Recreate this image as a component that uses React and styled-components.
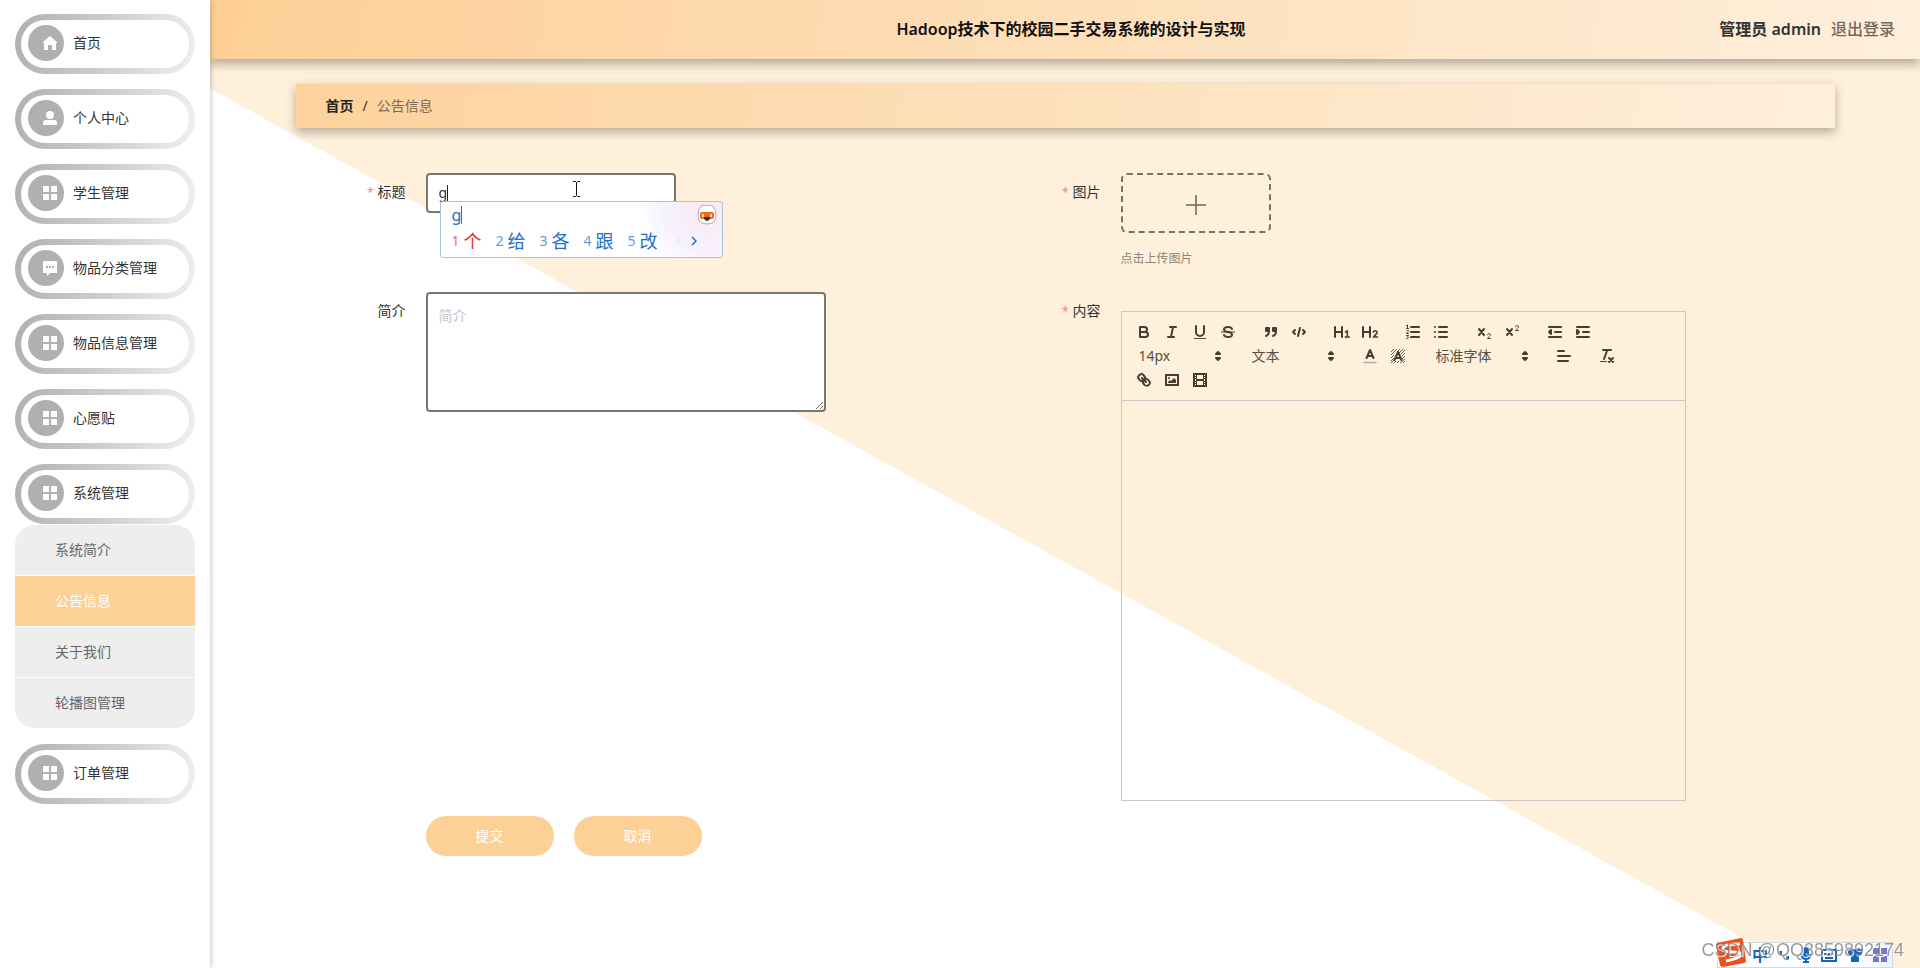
import { useState } from "react";
import styled, { createGlobalStyle } from "styled-components";

const GlobalStyle = createGlobalStyle`
  * {
    box-sizing: border-box;
  }

  body {
    margin: 0;
    color: #333;
    font-family: "Noto Sans", "Noto Sans CJK SC", sans-serif;
    font-size: 14px;
    line-height: 20px;
  }

  button, input, textarea, select {
    font: inherit;
    color: inherit;
  }

  a {
    color: inherit;
    text-decoration: none;
  }
`;

const Layout = styled.div`
  display: flex;
  min-height: 100vh;
`;

const Sidebar = styled.aside`
  position: relative;
  z-index: 2;
  flex: 0 0 210px;
  padding: 14px 15px;
  background-color: #fff;
  box-shadow: 0 0 6px rgba(0, 0, 0, 0.3);
`;

const Menu = styled.nav`
  display: flex;
  flex-direction: column;
  gap: 15px;
`;

const MenuLink = styled.a`
  display: flex;
  align-items: center;
  gap: 9px;
  height: 60px;
  padding: 0 7px 2px;
  border: 6px solid transparent;
  border-radius: 30px;
  background: linear-gradient(#fff, #fff) padding-box,
    linear-gradient(100deg, #b0b0b0, #cdcdcd 50%, #f0f0f0) border-box;
`;

const MenuIcon = styled.span`
  display: flex;
  align-items: center;
  justify-content: flex-end;
  width: 36px;
  height: 36px;
  padding-right: 7px;
  border-radius: 50%;
  background-color: #b0b0b0;
  color: #fff;
`;

const SubMenu = styled.div`
  margin-top: 1px;
  border-radius: 20px;
  overflow: hidden;
`;

const SubLink = styled.a`
  display: flex;
  align-items: center;
  height: 51px;
  padding-left: 40px;
  border-bottom: 1px solid #fff;
  background-color: ${(props) => (props.$active ? "#fdd098" : "#eee")};
  color: ${(props) => (props.$active ? "#fff" : "#666")};

  &:last-child {
    border-radius: 0 0 20px 20px;
  }
`;

const Group = styled.div``;

const Main = styled.main`
  flex: 1;
  min-width: 0;
  background: linear-gradient(29deg, #fff calc(50% - 69px), #fef0da calc(50% - 68px));
`;

const Header = styled.header`
  display: grid;
  grid-template-columns: 1fr auto 1fr;
  align-items: center;
  height: 59px;
  padding: 0 25px 2px 37px;
  background: linear-gradient(100deg, #fdcf96, #feefdc);
  box-shadow: 0 5px 10px rgba(0, 0, 0, 0.3);
  font-size: 16px;
  font-weight: 600;
`;

const Title = styled.h1`
  grid-column: 2;
  margin: 0;
  color: #111;
  font-size: 16px;
  font-weight: 600;
`;

const UserInfo = styled.div`
  display: flex;
  justify-content: flex-end;
  gap: 10px;
`;

const Logout = styled.a`
  color: #75695c;
  font-weight: 500;
`;

const Breadcrumb = styled.nav`
  display: flex;
  align-items: center;
  gap: 9px;
  height: 44px;
  margin: 25px 5% 45px;
  padding: 0 30px;
  background: linear-gradient(100deg, #fdd29c, #feefdc);
  box-shadow: 0 4px 10px rgba(0, 0, 0, 0.3);
`;

const CrumbLink = styled.a`
  color: #222;
  font-weight: 600;
`;

const Crumb = styled.span`
  color: #7a6b58;
`;

const Form = styled.form`
  display: grid;
  grid-template-columns: 1fr 1fr;
  row-gap: 15px;
  margin: 0 5%;
  padding: 0 99px 0 50px;
`;

const Field = styled.div`
  display: flex;
  align-items: flex-start;
  min-height: ${(props) => props.$height};
`;

const Label = styled.label`
  flex: 0 0 80px;
  padding-right: 20px;
  line-height: 38px;
  text-align: right;
  white-space: nowrap;

  ${(props) =>
    props.$required &&
    `
    &::before {
      content: "*";
      margin-right: 4px;
      color: #f58080;
      font-size: 12px;
    }
  `}
`;

const InputWrap = styled.div`
  position: relative;
`;

const Input = styled.input`
  display: block;
  width: 250px;
  height: 40px;
  padding: 0 11px 2px;
  border: 2px solid #7d766e;
  border-radius: 4px;
  background-color: #fff;
  outline: none;
`;

const Caret = styled.span`
  position: absolute;
  top: 12px;
  left: 21px;
  width: 1px;
  height: 16px;
  background-color: #222;
`;

const Pointer = styled.svg`
  position: absolute;
  top: 7px;
  left: 146px;
`;

const ImePanel = styled.div`
  position: absolute;
  z-index: 3;
  top: 28px;
  left: 14px;
  width: 283px;
  height: 57px;
  padding: 1px 11px;
  border: 1px solid #a9c4d6;
  border-radius: 3px;
  background: radial-gradient(circle at 95% 10%, #fbe9f3, #f6f2fd 16%, #fff 26%);
  color: #1f6fc9;
`;

const ImeTyped = styled.div`
  display: flex;
  align-items: center;
  justify-content: space-between;
  height: 24px;
  margin-right: -6px;
  font-size: 16px;

  span {
    height: 18px;
    border-right: 1px solid #d33;
    line-height: 18px;
  }
`;

const ImeList = styled.div`
  display: flex;
  align-items: center;
  gap: 14px;
  height: 28px;
  font-size: 18px;
`;

const Candidate = styled.span`
  display: flex;
  align-items: center;
  gap: 4px;
  color: ${(props) => (props.$active ? "#e0342b" : "#1f6fc9")};

  small {
    opacity: 0.7;
    font-size: 14px;
  }
`;

const ImePager = styled.span`
  display: flex;
  gap: 9px;
  margin-left: 4px;
`;

const TextArea = styled.textarea`
  display: block;
  width: 400px;
  height: 120px;
  padding: 12px 11px;
  border: 2px solid #7d766e;
  border-radius: 4px;
  background-color: #fff;
  outline: none;

  &::placeholder {
    color: #c0c4cc;
  }
`;

const UploadButton = styled.button`
  display: flex;
  align-items: center;
  justify-content: center;
  width: 150px;
  height: 60px;
  padding: 4px 0 0;
  border: 2px dashed #7d7063;
  border-radius: 6px;
  background: none;
  cursor: pointer;
`;

const UploadTip = styled.p`
  margin: 16px 0 0;
  color: #8d857b;
  font-size: 12px;
`;

const Editor = styled.div`
  flex: 1;
  margin: 19px 50px 0 0;
  border: 1px solid #cfc6c4;
`;

const Toolbar = styled.div`
  display: flex;
  flex-wrap: wrap;
  column-gap: 15px;
  padding: 8px;
  border-bottom: 1px solid #cfc6c4;
`;

const ToolGroup = styled.div`
  display: flex;
`;

const ToolButton = styled.button`
  width: 28px;
  height: 24px;
  padding: 3px 5px;
  border: none;
  background: none;
  cursor: pointer;
`;

const ToolIcon = styled.svg`
  display: block;
  width: 18px;
  height: 18px;
  fill: none;
  stroke: #473d33;
  stroke-width: 2;
  stroke-linecap: round;
  stroke-linejoin: round;

  .thin {
    stroke-width: 1;
  }

  .fill {
    fill: #473d33;
    stroke: none;
  }

  .solid {
    fill: #473d33;
  }
`;

const Picker = styled.div`
  position: relative;
  width: ${(props) => props.$width};
  height: 24px;
  color: #5a4f44;

  select {
    width: 100%;
    height: 24px;
    padding: 0 18px 0 9px;
    border: none;
    background: none;
    appearance: none;
    line-height: 24px;
  }

  svg {
    position: absolute;
    top: 3px;
    right: 1px;
    pointer-events: none;
  }
`;

const EditorBody = styled.textarea`
  display: block;
  width: 100%;
  height: 399px;
  padding: 12px 15px;
  border: none;
  background: none;
  outline: none;
  resize: none;
`;

const Actions = styled.div`
  display: flex;
  grid-column: 1 / -1;
  gap: 20px;
  padding-left: 80px;
`;

const ActionButton = styled.button`
  width: 128px;
  height: 40px;
  border: none;
  border-radius: 20px;
  background-color: #fdd098;
  color: #fff;
  cursor: pointer;
`;

const Tray = styled.div`
  position: fixed;
  z-index: 4;
  right: 27px;
  bottom: 0;
  display: flex;
  align-items: center;
  width: 176px;
  height: 26px;
  border: 1px solid #d5d8e6;
  background: linear-gradient(90deg, #fff 80%, #e4f5fd);
  color: #1264c4;
`;

const TrayLogo = styled.svg`
  flex: none;
  margin: -6px 6px 0 -2px;
`;

const TrayItems = styled.div`
  display: flex;
  flex: 1;
  align-items: center;
  justify-content: space-between;
  padding-right: 5px;
`;

const TrayMode = styled.span`
  font-size: 16px;
  font-weight: 700;
`;

const Watermark = styled.div`
  position: fixed;
  z-index: 5;
  right: 16px;
  bottom: 8px;
  color: rgba(120, 120, 120, 0.75);
  font-family: "Liberation Sans", sans-serif;
  font-size: 18px;
  text-shadow: 1px 1px 0 rgba(255, 255, 255, 0.8);
`;

const menuIcons = {
  home: <path d="M7 0 0 6v1h1v7h4V9h4v5h4V7h1V6z" />,
  user: (
    <>
      <circle cx="7" cy="4" r="4" />
      <path d="M0 14v-2q0-3 3-3h8q3 0 3 3v2z" />
    </>
  ),
  grid: <path d="M0 0h6v6H0zM8 0h6v6H8zM0 8h6v6H0zM8 8h6v6H8z" />,
  chat: (
    <>
      <path d="M0 0h14v12H7l-3 3v-3H0z" />
      <path d="M3 5h2v2H3zM6 5h2v2H6zM9 5h2v2H9z" fill="#b0b0b0" />
    </>
  ),
};

const menu = [
  { name: "首页", icon: "home" },
  { name: "个人中心", icon: "user" },
  { name: "学生管理", icon: "grid" },
  { name: "物品分类管理", icon: "chat" },
  { name: "物品信息管理", icon: "grid" },
  { name: "心愿贴", icon: "grid" },
  {
    name: "系统管理",
    icon: "grid",
    children: ["系统简介", "公告信息", "关于我们", "轮播图管理"],
  },
  { name: "订单管理", icon: "grid" },
];

const hShape = <path d="M2 4v10M9 4v10M2 9h7" />;
const aShape = <path d="M5.5 11 9 3l3.5 8M6.4 9h5.2" />;

const tools = {
  bold: <path d="M5 4h4.5a2.5 2.5 0 0 1 0 5H5zM5 9h5.5a2.5 2.5 0 0 1 0 5H5z" />,
  italic: <path d="M7 4h6M5 14h6M8 14l2-10" />,
  underline: (
    <>
      <path d="M5 3v6a4 4 0 0 0 8 0V3" />
      <rect className="fill" x="3" y="15" width="12" height="1" />
    </>
  ),
  strike: (
    <>
      <path d="M13 6C12.500 4.600 10.800 4 9 4 6.700 4 5 5 5 6.500 5 8 6.500 8.700 9 9s4 1 4 2.500S11.300 14 9 14c-1.800 0-3.500-.6-4-2" />
      <path className="thin" d="M2.500 9h13" />
    </>
  ),
  blockquote: (
    <>
      <rect className="solid" x="4" y="5" width="3" height="3" />
      <rect className="solid" x="11" y="5" width="3" height="3" />
      <path d="M7 8c0 4-3 5-3 5M14 8c0 4-3 5-3 5" />
    </>
  ),
  code: (
    <>
      <path d="M5 7 3 9l2 2M13 7l2 2-2 2" />
      <path d="M10 5 8 13" />
    </>
  ),
  h1: (
    <>
      {hShape}
      <path d="M12.500 9 14.300 7.800V14M12.300 14h4" strokeWidth="1.600" />
    </>
  ),
  h2: (
    <>
      {hShape}
      <path d="M12.500 9c.3-1.700 3.600-1.600 3.600.3 0 1.500-2.200 2.600-3.600 4.700h4" strokeWidth="1.600" />
    </>
  ),
  ordered: (
    <>
      <path d="M7 4h8M7 9h8M7 14h8" />
      <path
        className="thin"
        d="M2.500 2.500 3.500 2v3.500M2.500 5.500h2M2.500 8c.5-1 2-.7 2 .2 0 .8-1.300 1.300-2 2.300h2M2.500 12.500h2l-1 1.300c1.300 0 1.300 2-1 1.700"
      />
    </>
  ),
  bullet: <path d="M7 4h8M7 9h8M7 14h8M3 4h0M3 9h0M3 14h0" />,
  sub: (
    <>
      <path d="M4 6l5 6M9 6l-5 6" />
      <path className="thin" d="M12.500 11.800c.3-1.700 3-1.500 3 0 0 1.200-2 2-3 3.700h3" />
    </>
  ),
  sup: (
    <>
      <path d="M4 6l5 6M9 6l-5 6" />
      <path className="thin" d="M12.500 3.800c.3-1.700 3-1.500 3 0 0 1.200-2 2-3 3.700h3" />
    </>
  ),
  outdent: (
    <>
      <path d="M3 4h12M3 14h12M9 9h6" />
      <path className="solid" d="M5 7v4L3 9z" />
    </>
  ),
  indent: (
    <>
      <path d="M3 4h12M3 14h12M9 9h6" />
      <path className="solid" d="M3 7v4l2-2z" />
    </>
  ),
  color: (
    <>
      {aShape}
      <path d="M3 15.500h12" stroke="#b5aa9e" strokeWidth="1.500" />
    </>
  ),
  background: (
    <>
      <path
        strokeWidth="0.800"
        strokeLinecap="butt"
        d="M2 5 5 2M2 8 8 2M2 11l3-3M8 5l3-3M2 14l3-3M10 6l4-4M2 16l3-3M12 7l4-4M13 9l3-3M5 16l2-2M8 16l2-2M13 12l3-3M11 16l5-4M14 16l2-2"
      />
      <path d="M5.500 13 9 5l3.500 8M6.400 11h5.200" />
    </>
  ),
  align: <path d="M3 4h6M3 9h12M3 14h10" />,
  clean: (
    <>
      <path d="M5 3h8M6 12l3.300-9M11 11l4 4M15 11l-4 4" />
      <path className="thin" d="M2 14.500h7" strokeLinecap="butt" />
    </>
  ),
  link: (
    <>
      <path d="M7 7l4 4" />
      <path d="M8.900 4.600a3.500 3.500 0 0 1 .4 4.700 3.500 3.500 0 0 1-4.700-.4C3.200 7.500 2 6.400 4.200 4.200S7.500 3.200 8.900 4.600z" />
      <path d="M13.400 9.100a3.500 3.500 0 0 0-4.700-.4 3.500 3.500 0 0 0 .4 4.700c1.400 1.400 2.500 2.500 4.700.4S14.800 10.500 13.400 9.100z" />
    </>
  ),
  image: (
    <>
      <rect x="3" y="4" width="12" height="10" strokeLinejoin="miter" />
      <circle className="fill" cx="6" cy="7" r="1" />
      <path className="fill" d="M5 12v-1l2-2 1 1 3-3 2 2v3z" />
    </>
  ),
  video: (
    <>
      <rect x="3" y="3" width="12" height="12" strokeLinejoin="miter" />
      <path
        className="fill"
        d="M5 3h1v12H5zM12 3h1v12h-1zM5 8h8v2H5zM3 5h3v1H3zM3 7h3v1H3zM3 10h3v1H3zM3 12h3v1H3zM12 5h3v1h-3zM12 7h3v1h-3zM12 10h3v1h-3zM12 12h3v1h-3z"
      />
    </>
  ),
};

const toolbar = [
  ["bold", "italic", "underline", "strike"],
  ["blockquote", "code"],
  ["h1", "h2"],
  ["ordered", "bullet"],
  ["sub", "sup"],
  ["outdent", "indent"],
  { label: "字号", value: "14px", width: "98px" },
  { label: "标题格式", value: "文本", width: "98px" },
  ["color", "background"],
  { label: "字体", value: "标准字体", width: "108px" },
  ["align"],
  ["clean"],
  ["link", "image", "video"],
];

const candidates = ["个", "给", "各", "跟", "改"];

const EditorToolbar = () => (
  <Toolbar>
    {toolbar.map((item, i) =>
      Array.isArray(item) ? (
        <ToolGroup key={i}>
          {item.map((name) => (
            <ToolButton type="button" key={name} aria-label={name}>
              <ToolIcon viewBox="0 0 18 18">{tools[name]}</ToolIcon>
            </ToolButton>
          ))}
        </ToolGroup>
      ) : (
        <Picker key={i} $width={item.width}>
          <select aria-label={item.label}>
            <option>{item.value}</option>
          </select>
          <ToolIcon viewBox="0 0 18 18">
            <path className="solid" d="M7 11h4l-2 2zM7 7h4L9 5z" />
          </ToolIcon>
        </Picker>
      )
    )}
  </Toolbar>
);

const Ime = () => (
  <ImePanel>
    <ImeTyped>
      <span>g</span>
      <svg width="20" height="22" viewBox="0 0 20 22">
        <path
          d="M4 2q3-2 6 0 3-2 6 0 3 4 3 9 0 9-9 9T1 11q0-5 3-9z"
          fill="#fff"
          stroke="#b9a6c0"
        />
        <rect x="3" y="8" width="14" height="7" rx="2" fill="#ee6a1c" />
        <path d="M5 10h2v3H5zM13 10h2v3h-2z" fill="#ffd9a0" />
        <path d="M7 13h6v2q-3 4-6 0z" fill="#3d3432" />
      </svg>
    </ImeTyped>
    <ImeList>
      {candidates.map((word, i) => (
        <Candidate key={word} $active={i === 0}>
          <small>{i + 1}</small>
          {word}
        </Candidate>
      ))}
      <ImePager>
        <svg width="6" height="10" viewBox="0 0 6 10" fill="none" stroke="#d5dce6">
          <path d="M5 1 1 5l4 4" />
        </svg>
        <svg width="6" height="10" viewBox="0 0 6 10" fill="none" stroke="#1f6fc9" strokeWidth="1.500">
          <path d="m1 1 4 4-4 4" />
        </svg>
      </ImePager>
    </ImeList>
  </ImePanel>
);

const App = () => {
  const [title, setTitle] = useState("g");
  const [intro, setIntro] = useState("");

  return (
    <Layout>
      <GlobalStyle />
      <Sidebar>
        <Menu>
          {menu.map((item) => (
            <Group key={item.name}>
              <MenuLink href="#">
                <MenuIcon>
                  <svg width="14" height="15" viewBox="0 0 14 15" fill="currentColor">
                    {menuIcons[item.icon]}
                  </svg>
                </MenuIcon>
                {item.name}
              </MenuLink>
              {item.children && (
                <SubMenu>
                  {item.children.map((child) => (
                    <SubLink href="#" key={child} $active={child === "公告信息"}>
                      {child}
                    </SubLink>
                  ))}
                </SubMenu>
              )}
            </Group>
          ))}
        </Menu>
      </Sidebar>
      <Main>
        <Header>
          <Title>Hadoop技术下的校园二手交易系统的设计与实现</Title>
          <UserInfo>
            <span>管理员 admin</span>
            <Logout href="#">退出登录</Logout>
          </UserInfo>
        </Header>
        <Breadcrumb>
          <CrumbLink href="#">首页</CrumbLink>
          <span>/</span>
          <Crumb>公告信息</Crumb>
        </Breadcrumb>
        <Form onSubmit={(e) => e.preventDefault()}>
          <Field $height="104px">
            <Label htmlFor="title" $required>标题</Label>
            <InputWrap>
              <Input id="title" value={title} onChange={(e) => setTitle(e.target.value)} />
              <Caret />
              <Pointer width="9" height="18" viewBox="0 0 9 18" fill="none" stroke="#111">
                <path d="M1 1.500h2.500l1 1 1-1H8M4.500 2.500v13M1 16.500h2.500l1-1 1 1H8" />
              </Pointer>
              <Ime />
            </InputWrap>
          </Field>
          <Field $height="104px">
            <Label htmlFor="upload" $required>图片</Label>
            <div>
              <UploadButton id="upload" type="button" aria-label="上传图片">
                <svg width="20" height="20" viewBox="0 0 20 20" stroke="#6f6254" strokeWidth="1.500">
                  <path d="M10 0v20M0 10h20" />
                </svg>
              </UploadButton>
              <UploadTip>点击上传图片</UploadTip>
            </div>
          </Field>
          <Field>
            <Label htmlFor="intro">简介</Label>
            <TextArea
              id="intro"
              placeholder="简介"
              value={intro}
              onChange={(e) => setIntro(e.target.value)}
            />
          </Field>
          <Field>
            <Label htmlFor="content" $required>内容</Label>
            <Editor>
              <EditorToolbar />
              <EditorBody id="content" />
            </Editor>
          </Field>
          <Actions>
            <ActionButton type="submit">提交</ActionButton>
            <ActionButton type="button">取消</ActionButton>
          </Actions>
        </Form>
      </Main>
      <Tray>
        <TrayLogo width="30" height="30" viewBox="0 0 30 30">
          <path d="M1 6 25 1q2 0 2 2l3 21q0 2-2 2L7 30q-2 0-3-2L0 9q0-2 1-3z" fill="#f0501e" />
          <path
            d="M24 7Q8 7 7 11t9 4 9 3-15 6"
            fill="none"
            stroke="#fff"
            strokeWidth="3"
          />
        </TrayLogo>
        <TrayItems>
          <TrayMode>中</TrayMode>
          <svg width="12" height="14" viewBox="0 0 12 14" fill="currentColor">
            <path d="M1 3h3v3L2 8zM8 8h3v3l-2 2z" />
          </svg>
          <svg width="12" height="16" viewBox="0 0 12 16" fill="none" stroke="currentColor" strokeWidth="2">
            <rect x="4" y="1" width="4" height="8" rx="2" fill="currentColor" />
            <path d="M1 7q1 5 5 5t5-5M6 12v3M3 15h6" />
          </svg>
          <svg width="16" height="13" viewBox="0 0 16 13" fill="none" stroke="currentColor" strokeWidth="2">
            <path d="M1 1h14v11H1zM3 5h2M7 5h2M11 5h2M4 9h8" />
          </svg>
          <svg width="16" height="14" viewBox="0 0 16 14" fill="currentColor">
            <path d="M0 2 5 0q3 3 6 0l5 2-2 5h-2v7H4V7H2z" />
          </svg>
          <svg width="14" height="14" viewBox="0 0 14 14" fill="#7d73cf">
            <path d="M0 0h6v6H0zM8 0h6v6H8zM0 8h6v6H0zM8 8h6v6H8z" />
          </svg>
        </TrayItems>
      </Tray>
      <Watermark>CSDN @QQ3859892174</Watermark>
    </Layout>
  );
};

export default App;
